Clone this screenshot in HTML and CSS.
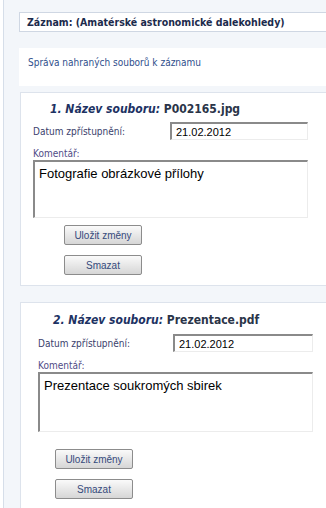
FILE: index.html
```html
<!DOCTYPE html>
<html>
<head>
    <meta charset="UTF-8">
    <meta name="viewport" content="width=device-width, initial-scale=1.0">
    <title>Správa souborů</title>
    <link rel="stylesheet" href="styles.css">
</head>
<body>

    <div class="page">
        <div class="record-bar">Záznam: (Amatérské astronomické dalekohledy)</div>

        <div class="subtitle">Správa nahraných souborů k záznamu</div>

        <div class="file-card">
            <h2 class="file-title"><em>1. Název souboru:</em> P002165.jpg</h2>
            <div class="field-row">
                <label class="field-label">Datum zpřístupnění:</label>
                <input class="date-input" type="text" value="21.02.2012">
            </div>
            <label class="field-label comment-label">Komentář:</label>
            <textarea class="comment-input">Fotografie obrázkové přílohy</textarea>
            <div class="actions">
                <button class="btn">Uložit změny</button>
                <button class="btn">Smazat</button>
            </div>
        </div>

        <div class="file-card file-card-second">
            <h2 class="file-title"><em>2. Název souboru:</em> Prezentace.pdf</h2>
            <div class="field-row">
                <label class="field-label">Datum zpřístupnění:</label>
                <input class="date-input" type="text" value="21.02.2012">
            </div>
            <label class="field-label comment-label">Komentář:</label>
            <textarea class="comment-input">Prezentace soukromých sbirek</textarea>
            <div class="actions">
                <button class="btn">Uložit změny</button>
                <button class="btn">Smazat</button>
            </div>
        </div>
    </div>

</body>
</html>
```

FILE: styles.css
```css
html, body {
    margin: 0;
    padding: 0;
    background-color: #ffffff;
    overflow: hidden;
}
body {
    font-family: "DejaVu Sans Condensed", "DejaVu Sans", sans-serif;
    height: 508px;
}
.page {
    margin-left: 3px;
    border-left: 1px solid #d6dee9;
    background-color: #f3f6fa;
    padding: 12px 0 0 15px;
    height: 508px;
    box-sizing: border-box;
}
.record-bar {
    height: 18px;
    line-height: 18px;
    padding-left: 7px;
    background-color: #ffffff;
    border: 1px solid #cfd7e3;
    border-right: none;
    font-size: 10.5px;
    font-weight: bold;
    color: #1c2b4c;
}
.subtitle {
    margin-top: 16px;
    height: 38px;
    line-height: 30px;
    padding-left: 9px;
    background-color: #ffffff;
    font-size: 10px;
    color: #2f4f8c;
}
.file-card {
    margin: 6px 0 0 1px;
    padding: 8px 0 10px 12px;
    background-color: #ffffff;
    border: 1px solid #dde3ec;
    border-right: none;
}
.file-title {
    margin: 0 0 5px 17px;
    font-size: 12px;
    line-height: 16px;
    font-weight: bold;
    color: #2a3448;
}
.file-title em {
    font-size: 12px;
    color: #1d3263;
}
.field-row {
    display: grid;
    grid-template-columns: 137px 138px;
    align-items: center;
}
.field-label {
    display: block;
    font-size: 10px;
    color: #3a3e6c;
}
.comment-label {
    margin-top: 8px;
    color: #4f4b86;
}
.date-input {
    box-sizing: border-box;
    width: 138px;
    height: 18px;
    margin: 0;
    padding: 0 4px;
    font-family: "Liberation Sans", Arial, sans-serif;
    font-size: 11px;
    color: #000000;
    border-style: solid;
    border-width: 2px 1px 1px 2px;
    border-color: #8a8a8a #ececec #ececec #8a8a8a;
    background-color: #ffffff;
}
.comment-input {
    display: block;
    box-sizing: border-box;
    width: 275px;
    height: 58px;
    margin: 1px 0 0 0;
    padding: 4px 4px;
    font-family: "Liberation Sans", Arial, sans-serif;
    font-size: 13px;
    color: #000000;
    border-style: solid;
    border-width: 2px 1px 1px 2px;
    border-color: #8a8a8a #ececec #ececec #8a8a8a;
    resize: none;
    overflow: hidden;
}
.actions {
    display: flex;
    flex-direction: column;
    align-items: flex-start;
    gap: 10px;
    margin: 7px 0 0 31px;
}
.btn {
    width: 78px;
    height: 20px;
    padding: 0;
    font-family: "Liberation Sans", Arial, sans-serif;
    font-size: 10px;
    color: #354a7c;
    background: linear-gradient(#fafafa, #e6e6e6 55%, #d6d6d6);
    border: 1px solid #8c8c8c;
    border-radius: 2px;
}
.file-card-second {
    margin-top: 16px;
    padding-left: 17px;
    padding-top: 9px;
}
.file-card-second .file-title {
    margin-left: 15px;
    margin-bottom: 6px;
}
.file-card-second .field-row {
    grid-template-columns: 135px 140px;
}
.file-card-second .date-input {
    width: 140px;
}
.file-card-second .comment-input {
    height: 60px;
}
.file-card-second .actions {
    margin: 17px 0 0 17px;
}
```
